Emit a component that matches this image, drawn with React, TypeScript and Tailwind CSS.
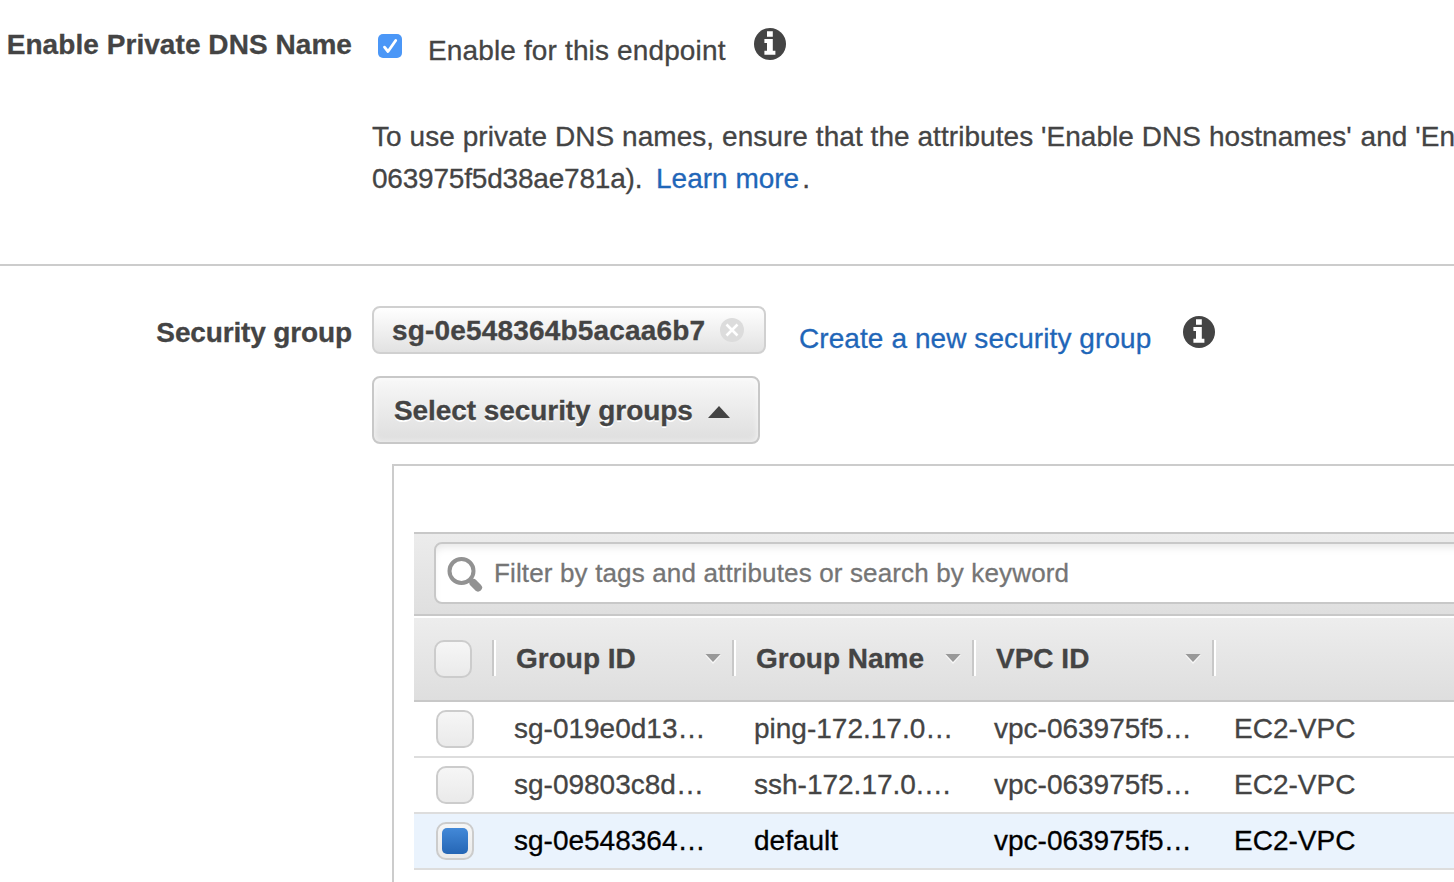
import React from "react";

const rows = [
  { id: "sg-019e0d13…", name: "ping-172.17.0…", vpc: "vpc-063975f5…", type: "EC2-VPC", selected: false },
  { id: "sg-09803c8d…", name: "ssh-172.17.0.…", vpc: "vpc-063975f5…", type: "EC2-VPC", selected: false },
  { id: "sg-0e548364…", name: "default", vpc: "vpc-063975f5…", type: "EC2-VPC", selected: true },
];

function InfoIcon({ className = "" }: { className?: string }) {
  return (
    <svg className={"h-8 w-8 shrink-0 " + className} viewBox="0 0 32 32">
      <circle cx="16" cy="16" r="16" fill="#444" />
      <path fill="#fff" d="M13 3.200h5.800v5.600H13zM10.400 11h8.400v11.700h2.600v4H10.400v-4h2.600v-7.700h-2.600z" />
    </svg>
  );
}

function Box({ checked = false }: { checked?: boolean }) {
  return (
    <span className="flex h-[38px] w-[38px] shrink-0 items-center justify-center rounded-[10px] border-2 border-[#ccc] bg-linear-to-b from-[#f6f6f6] to-[#eaeaea]">
      {checked && <span className="h-[26px] w-[26px] rounded-[5px] bg-linear-to-b from-[#4389d8] to-[#2566b5]" />}
    </span>
  );
}

function HeaderCell({ label, sortable = true }: { label: string; sortable?: boolean }) {
  return (
    <div className="flex h-9 w-60 shrink-0 items-center border-l-2 border-[#c8c8c8]">
      <div className="flex h-9 flex-1 items-center justify-between border-l-2 border-white pr-[11px] pl-5">
        <span className="pt-px leading-8 font-bold whitespace-nowrap">{label}</span>
        {sortable && (
          <svg className="h-[11px] w-4 shrink-0" viewBox="0 0 16 11">
            <path d="M0 2h16l-8 9z" fill="#f8f8f8" />
            <path d="M0.500 1h15L8 9z" fill="#999" />
          </svg>
        )}
      </div>
    </div>
  );
}

export default function App() {
  return (
    <div className="h-[882px] w-[1454px] overflow-hidden bg-white font-['Liberation_Sans',Arial,sans-serif] text-[28px] leading-8 text-[#444] [-webkit-text-stroke:0.3px]">
      <section className="flex h-[266px] border-b-2 border-[#ccc] pt-7">
        <div className="w-[352px] shrink-0 pt-px text-right font-bold tracking-[0.06px] whitespace-nowrap">Enable Private DNS Name</div>
        <div className="ml-5 w-[1082px] shrink-0">
          <div className="flex h-[86px] items-start pl-[6px]">
            <span className="mt-[6px] flex h-6 w-6 items-center justify-center rounded-[5px] bg-[#4b97f7]">
              <svg className="h-6 w-6" viewBox="0 0 24 24">
                <path d="M6.500 13.200l3.500 4.300L17.700 6.500" fill="none" stroke="#fff" strokeWidth="2.800" strokeLinecap="round" strokeLinejoin="round" />
              </svg>
            </span>
            <span className="mt-[7px] ml-[26px] w-[297.5px] tracking-[0.14px] whitespace-nowrap">Enable for this endpoint</span>
            <InfoIcon className="ml-7" />
          </div>
          <div className="mt-[2px] leading-[42px] whitespace-nowrap">
            <div className="tracking-[0.055px]">
              To use private DNS names, ensure that the attributes 'Enable DNS hostnames' <span className="ml-px">and 'En</span>
            </div>
            <div className="flex">
              <span className="w-[271px] tracking-[-0.2px]">063975f5d38ae781a).</span>
              <a className="ml-[13px] text-[#1f66b8]">Learn more</a>
              <span className="ml-[3px]">.</span>
            </div>
          </div>
        </div>
      </section>

      <section className="flex pt-10">
        <div className="w-[352px] shrink-0 pt-[11px] text-right font-bold tracking-[-0.14px] whitespace-nowrap">Security group</div>
        <div className="ml-5 shrink-0">
          <div className="flex h-[70px] items-start">
            <div className="flex h-12 w-[394px] items-center rounded-[8px] border-2 border-[#d0d0d0] bg-linear-to-b from-white to-[#e2e2e2] pl-[18px]">
              <span className="w-[314px] pt-px font-bold tracking-[0.17px] whitespace-nowrap">sg-0e548364b5acaa6b7</span>
              <svg className="ml-[14px] h-6 w-6" viewBox="0 0 24 24">
                <circle cx="12" cy="12" r="12" fill="#dcdcdc" />
                <path d="M6.500 6.500l11 11M17.500 6.500l-11 11" stroke="#fff" strokeWidth="2.600" />
              </svg>
            </div>
            <a className="mt-[17px] ml-[33px] w-[352px] tracking-[0.08px] whitespace-nowrap text-[#1f66b8]">Create a new security group</a>
            <InfoIcon className="mt-[10px] ml-8" />
          </div>
          <button className="flex h-[68px] w-[388px] items-center rounded-[8px] border-2 border-[#c8c8c8] bg-linear-to-b from-[#f8f8f8] to-[#dedede] pl-5 shadow-[inset_0_0_6px_rgba(255,255,255,0.7)]">
            <span className="w-[298px] pt-px text-left font-bold tracking-[-0.07px] whitespace-nowrap [text-shadow:0_2px_0_#fff]">Select security groups</span>
            <svg className="mt-1 ml-4 h-3 w-[22px]" viewBox="0 0 22 12">
              <path d="M0 12L11 0l11 12z" fill="#444" />
            </svg>
          </button>

          <div className="mt-5 ml-5 h-[440px] w-[1100px] border-2 border-[#ccc] pt-[66px] pl-5">
            <div className="flex h-[84px] items-start border-y-2 border-[#c8c8c8] bg-linear-to-b from-[#ececec] to-[#dfdfdf] pt-2 pl-5">
              <div className="flex h-[62px] w-[1100px] shrink-0 items-center rounded-[8px] border-2 border-[#c8c8c8] bg-white pl-[11px] shadow-[inset_0_6px_8px_-3px_rgba(0,0,0,0.1)]">
                <svg className="mt-1 h-9 w-9" viewBox="0 0 36 36" fill="none" stroke="#929292">
                  <circle cx="14.500" cy="14" r="12" strokeWidth="4" />
                  <path d="M23 22.500l4 4" strokeWidth="5" />
                  <path d="M26.500 26l4.500 4.500" strokeWidth="8" strokeLinecap="round" />
                </svg>
                <span className="ml-[11px] text-[26px] tracking-[0.145px] whitespace-nowrap text-[#757575]">Filter by tags and attributes or search by keyword</span>
              </div>
            </div>
            <div className="flex h-[86px] items-start border-t-2 border-b-2 border-t-white border-b-[#c8c8c8] bg-linear-to-b from-[#ededed] to-[#dedede] pt-[22px] pl-5">
              <Box />
              <div className="ml-5 flex">
                <HeaderCell label="Group ID" />
                <HeaderCell label="Group Name" />
                <HeaderCell label="VPC ID" />
                <HeaderCell label="" sortable={false} />
              </div>
            </div>
            {rows.map((r) => (
              <div
                key={r.id}
                className={
                  "flex h-14 items-center border-b-2 border-[#ddd] pl-[22px] whitespace-nowrap " +
                  (r.selected ? "bg-[#eaf3fd] text-black" : "")
                }
              >
                <Box checked={r.selected} />
                <span className="ml-10 w-60 shrink-0">{r.id}</span>
                <span className="w-60 shrink-0">{r.name}</span>
                <span className="w-60 shrink-0">{r.vpc}</span>
                <span className="shrink-0">{r.type}</span>
              </div>
            ))}
          </div>
        </div>
      </section>
    </div>
  );
}
